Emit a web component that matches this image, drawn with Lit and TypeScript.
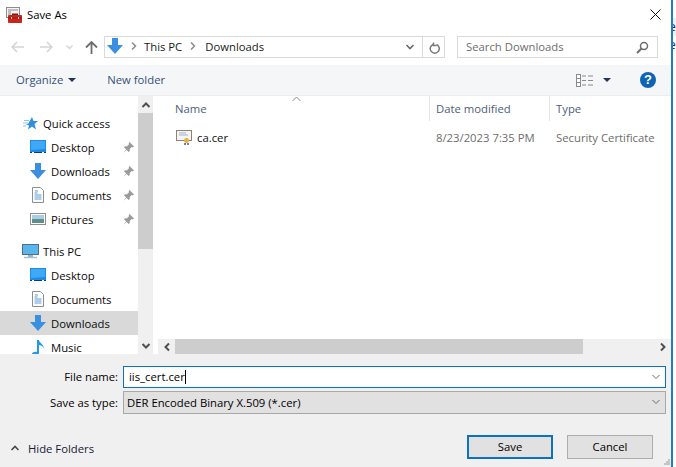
import { LitElement, html, css } from "lit";
import { customElement } from "lit/decorators.js";

const arrow = (c = "#3b8fe0") => html`<svg width="16" height="16" viewBox="0 0 16 16"><path d="M5 0h6v7h5l-8 9-8-9h5z" fill="${c}"/></svg>`;
const desktop = html`<svg width="16" height="14" viewBox="0 0 16 14"><rect x="0" y="0" width="16" height="12" fill="#1b8ce8"/><path d="M1 1h14v8L1 10z" fill="#3fa9f5"/><path d="M0 12h16v1H0z" fill="#0a3d6e"/><path d="M2 12h2v1H2zM12 12h2v1h-2z" fill="#fff"/></svg>`;
const docIcon = html`<svg width="12" height="16" viewBox="0 0 12 16"><path d="M.5.5h8l3 3v12H.5z" fill="#fff" stroke="#8e8e8e"/><path d="M3 4h3M2.500 6h3M2.500 8h7M2.500 10h7M2.500 12h7" stroke="#5a9ad6"/></svg>`;
const pictures = html`<svg width="16" height="12" viewBox="0 0 16 12"><rect x=".5" y=".5" width="15" height="11" fill="#fff" stroke="#8d8d8d"/><rect x="2" y="2" width="12" height="4" fill="#a9cde8"/><rect x="2" y="6" width="12" height="4" fill="#5f8f86"/></svg>`;
const music = html`<svg width="13" height="17" viewBox="0 0 13 17"><path d="M5 1h2c0 3 5 4 5 9-1-3-3-4-5-4v8c0 2-2 3-4 3s-3-1-3-2 2-3 5-2z" fill="#1f9be8"/></svg>`;
const pc = html`<svg width="17" height="15" viewBox="0 0 17 15"><rect x=".5" y=".5" width="16" height="10" fill="#5ab5ec" stroke="#4f6f85"/><path d="M6 11h5v2H6z" fill="#9fb4c2"/><path d="M2 13.500h13" stroke="#a9c0ce" stroke-width="1.500"/></svg>`;
const pin = html`<svg width="11" height="11" viewBox="0 0 11 11"><path d="M6.500 0L11 4.500 9.800 5.300 8.700 5l-2 2 .1 2L5.700 10 1 5.300 2 4.200l2 .1 2-2-.3-1.100zM3 7.500L.3 10.700 3.500 8z" fill="#9a9a9a"/></svg>`;
const star = html`<svg width="15" height="15" viewBox="0 0 15 15"><path d="M9 1l1.500 4H15l-3.500 3 1.500 5.500-4-3-4 3 1-4L2.500 8H5z" fill="#2f8fdc"/><path d="M0 7h5M1 4.500h5M0 10h3" stroke="#8cc6ef"/></svg>`;
const chev = (d: string, c = "#5f5f5f", w = 2) => html`<svg width="10" height="10" viewBox="0 0 10 10"><path d="${d}" fill="none" stroke="${c}" stroke-width="${w}"/></svg>`;
const UP = "M1.500 7L5 3.500 8.500 7";
const DOWN = "M1.500 3L5 6.500 8.500 3";
const LEFT = "M7 1.500L3.500 5 7 8.500";
const RIGHT = "M3 1.500L6.500 5 3 8.500";

@customElement("app-root")
export class AppRoot extends LitElement {
  static styles = css`
    :host { display: block; width: 676px; height: 467px; background: #fff; overflow: hidden;
      font-family: "Open Sans", "Noto Sans", sans-serif; font-size: 11.3px; color: #000; }
    .page { display: flex; width: 676px; height: 467px; }
    .dialog { width: 673px; height: 467px; border-right: 2px solid #1e7ec8; display: flex; flex-direction: column; flex: none; box-sizing: border-box; }
    .strip { flex: 1; min-width: 0; display: flex; flex-direction: column; overflow: hidden; padding-top: 18px; }
    .strip div { line-height: 18px; text-indent: -4px; color: #1a2a3a; font-size: 12px; overflow: hidden; }
    .strip .shade { background: #f0f0f0; }
    .title { height: 30px; display: flex; align-items: center; padding-left: 6px; gap: 5px; flex: none; }
    .title span { margin-top: -2px; }
    .title .x { margin-left: auto; margin-right: 10px; display: flex; margin-top: -2px; }
    .nav { height: 35px; display: flex; align-items: flex-start; flex: none; padding-top: 6px; box-sizing: border-box; }
    .navbtns { width: 104px; height: 22px; display: flex; align-items: center; padding-left: 11px; box-sizing: border-box; }
    .addr { width: 341px; height: 22px; border: 1px solid #d9d9d9; box-sizing: border-box; display: flex; align-items: center; flex: none; padding-left: 2px; }
    .addr > svg { margin-top: -2px; }
    .crumb { display: flex; align-items: center; color: #1a1a1a; margin-top: -2px; }
    .sep { margin: 0 5px 0 6px; display: flex; }
    .dd { margin-left: auto; width: 24px; display: flex; justify-content: center; }
    .refresh { width: 21px; height: 20px; border-left: 1px solid #d9d9d9; display: flex; align-items: center; justify-content: center; }
    .search { margin-left: 12px; width: 201px; height: 22px; border: 1px solid #d9d9d9; box-sizing: border-box; display: flex; align-items: center; padding: 0 8px; color: #6d6d6d; justify-content: space-between; }
    .search span { margin-top: -1px; }
    .tools { height: 31px; background: #f5f6f7; flex: none; display: flex; align-items: center; color: #35527a; box-sizing: border-box; border-bottom: 1px solid #eceded; }
    .organize { margin-left: 16px; display: flex; align-items: center; gap: 5px; margin-top: -1px; }
    .caret { width: 0; height: 0; border-left: 4px solid transparent; border-right: 4px solid transparent; border-top: 4px solid #1f3658; }
    .newf { margin-left: 31px; margin-top: -1px; }
    .views { margin-left: auto; display: flex; align-items: center; gap: 10px; margin-right: 29px; }
    .help { margin-right: 15px; width: 16px; height: 16px; border-radius: 50%; background: #0e63b5; color: #fff; font: bold 13px/16px "Liberation Sans", sans-serif; text-align: center; }
    .main { height: 258px; display: flex; flex: none; }
    .tree { width: 138px; flex: none; overflow: hidden; padding-top: 15px; box-sizing: border-box; color: #0a0a0a; }
    .row { height: 24px; display: flex; align-items: center; }
    .row .ic { width: 18px; margin-left: 29px; margin-right: 4px; display: flex; justify-content: center; flex: none; }
    .row.top .ic { margin-left: 21px; margin-right: 4px; }
    .row.sel { background: #d9d9d9; }
    .row .pin { margin-left: auto; margin-right: 4px; display: flex; }
    .gap { height: 8px; }
    .vs { width: 15px; background: #f0f0f0; flex: none; display: flex; flex-direction: column; }
    .sb { height: 17px; display: flex; align-items: center; justify-content: center; flex: none; }
    .vthumb { height: 136px; background: #cdcdcd; flex: none; }
    .vfill { flex: 1; }
    .right { flex: 1; padding-left: 5px; display: flex; flex-direction: column; min-width: 0; }
    .head { height: 25px; display: grid; grid-template-columns: 272px 120px 120px; color: #4c607a; flex: none; }
    .head > div { display: flex; align-items: center; padding-left: 6px; box-sizing: border-box; border-right: 1px solid #e5e5e5; position: relative; }
    .head > div:first-child { padding-left: 17px; }
    .head > div:last-child { border-right: none; }
    .sort { position: absolute; left: 134px; top: 0; display: flex; }
    .file { height: 24px; margin-top: 4px; display: grid; grid-template-columns: 272px 120px 120px; align-items: center; color: #6d6d6d; flex: none; }
    .file > div { padding-left: 6px; white-space: nowrap; overflow: hidden; }
    .file .name { display: flex; align-items: center; gap: 5px; padding-left: 18px; color: #111; }
    .hs { height: 15px; display: flex; align-items: center; background: #f0f0f0; margin-top: auto; flex: none; }
    .hs .b { width: 17px; display: flex; justify-content: center; flex: none; }
    .hthumb { width: 408px; height: 15px; background: #cdcdcd; flex: none; }
    .hs .r { margin-left: auto; }
    .bottom { flex: 1; background: #f0f0f0; position: relative; padding-top: 12px; box-sizing: border-box; }
    .field { display: flex; align-items: center; margin-bottom: 3px; }
    .field label { width: 118px; text-align: right; margin-right: 5px; flex: none; padding-bottom: 1px; }
    .input { width: 543px; height: 22px; box-sizing: border-box; border: 1px solid #0a72c4; background: #fff; display: flex; align-items: center; padding: 0 0 1px 5px; }
    .input .cursor { width: 1px; height: 14px; background: #000; }
    .select { width: 543px; height: 23px; box-sizing: border-box; border: 1px solid #a8a8a8; background: #e1e1e1; display: flex; align-items: center; padding: 0 0 1px 3px; }
    .arrow { margin-left: auto; margin-right: 4px; display: flex; }
    .foot { display: flex; align-items: center; margin-top: 21px; }
    .hide { display: flex; align-items: center; gap: 8px; margin-left: 10px; margin-top: 2px; color: #1a2033; }
    .btn { width: 86px; height: 24px; box-sizing: border-box; border: 1px solid #adadad; background: #e1e1e1; display: flex; align-items: center; justify-content: center; padding-bottom: 2px; }
    .btn.def { border: 2px solid #0a72c4; margin-left: auto; margin-right: 14px; }
    .btn.cancel { margin-right: 18px; }
    .grip { position: absolute; right: 1px; bottom: 2px; display: flex; }
  `;

  render() {
    return html`<div class="page">
      <div class="dialog">
        <div class="title">
          <svg width="16" height="16" viewBox="0 0 16 16"><rect x=".5" y="0.500" width="13" height="10" fill="#f4f4f4" stroke="#8b8b8b"/><path d="M2 3h10M2 5h3M2 7h3" stroke="#8b8b8b"/><rect x="2" y="8" width="14" height="8" rx="1" fill="#c8261d"/><path d="M6 6.500h6V8H6z" fill="#7a1f1a"/><path d="M2 11h14" stroke="#8f1a14"/><path d="M5 10h1v2H5zM12 10h1v2h-1z" fill="#f6d9d6"/></svg>
          <span>Save As</span>
          <div class="x"><svg width="11" height="11" viewBox="0 0 11 11"><path d="M.5.500l10 10M10.500.500l-10 10" stroke="#111" stroke-width="1"/></svg></div>
        </div>
        <div class="nav">
          <div class="navbtns">
            <svg width="13" height="12" viewBox="0 0 13 12"><path d="M6 1L1.200 6 6 11M1.500 6H13" fill="none" stroke="#d4d4d4" stroke-width="1.600"/></svg>
            <svg style="margin-left:16px" width="13" height="12" viewBox="0 0 13 12"><path d="M7 1l4.800 5L7 11M11.500 6H0" fill="none" stroke="#d4d4d4" stroke-width="1.600"/></svg>
            <svg style="margin-left:12px" width="9" height="8" viewBox="0 0 9 8"><path d="M1.500 2.500L4.500 5.500 7.500 2.500" fill="none" stroke="#d4d4d4" stroke-width="1.400"/></svg>
            <svg style="margin-left:11px" width="13" height="13" viewBox="0 0 13 13"><path d="M1 6.500L6.500 1 12 6.500M6.500 1.500V13" fill="none" stroke="#6e6e6e" stroke-width="1.800"/></svg>
          </div>
          <div class="addr">
            ${arrow()}
            <div class="crumb">
              <span class="sep">${chev(RIGHT, "#8a8a8a", 1.5)}</span><span>This PC</span>
              <span class="sep" style="margin-right:7px">${chev(RIGHT, "#8a8a8a", 1.5)}</span><span>Downloads</span>
            </div>
            <div class="dd">${chev(DOWN, "#6a6a6a", 1.6)}</div>
            <div class="refresh"><svg width="12" height="13" viewBox="0 0 12 13"><path d="M4 2.500a4.500 4.500 0 1 0 3.500.0M4.500 .5v3h3" transform="translate(1 1)" fill="none" stroke="#7a7a7a" stroke-width="1.500"/></svg></div>
          </div>
          <div class="search"><span>Search Downloads</span>
            <svg width="13" height="13" viewBox="0 0 13 13"><circle cx="8" cy="5" r="3.500" fill="none" stroke="#6e6e6e" stroke-width="1.500"/><path d="M5.500 7.500L1 12" stroke="#6e6e6e" stroke-width="2"/></svg>
          </div>
        </div>
        <div class="tools">
          <div class="organize"><span>Organize</span><span class="caret"></span></div>
          <div class="newf">New folder</div>
          <div class="views">
            <svg width="17" height="13" viewBox="0 0 17 13"><rect x=".5" y=".5" width="4" height="12" fill="#fff" stroke="#8a8a8a"/><path d="M1 4.500h3M1 8.500h3" stroke="#8a8a8a"/><path d="M6 2h4M6 6.500h4M6 11h4M12 2h5M12 6.500h5M12 11h5" stroke="#8a8a8a"/></svg>
            <span class="caret"></span>
          </div>
          <div class="help">?</div>
        </div>
        <div class="main">
          <div class="tree">
            ${this.top(star, "Quick access")}
            ${this.item(desktop, "Desktop", true)}
            ${this.item(arrow(), "Downloads", true)}
            ${this.item(docIcon, "Documents", true)}
            ${this.item(pictures, "Pictures", true)}
            <div class="gap"></div>
            ${this.top(pc, "This PC")}
            ${this.item(desktop, "Desktop")}
            ${this.item(docIcon, "Documents")}
            ${this.item(arrow(), "Downloads", false, true)}
            ${this.item(music, "Music")}
          </div>
          <div class="vs">
            <div class="sb">${chev(UP, "#505050")}</div>
            <div class="vthumb"></div>
            <div class="vfill"></div>
            <div class="sb">${chev(DOWN, "#505050")}</div>
          </div>
          <div class="right">
            <div class="head">
              <div>Name<span class="sort"><svg width="9" height="6" viewBox="0 0 9 6"><path d="M.5 5L4.500 1l4 4" fill="none" stroke="#8a8a8a"/></svg></span></div>
              <div>Date modified</div>
              <div>Type</div>
            </div>
            <div class="file">
              <div class="name">
                <svg width="16" height="16" viewBox="0 0 16 16"><rect x=".5" y="1.500" width="15" height="10" fill="#f4f4f4" stroke="#8f8270"/><path d="M3 4h7M3 6h9" stroke="#9db3cc"/><circle cx="10.500" cy="11.500" r="2.500" fill="#e8b23a"/><path d="M9 14v2M12 14v2" stroke="#2f62b0" stroke-width="1.500"/></svg>
                <span>ca.cer</span>
              </div>
              <div>8/23/2023 7:35 PM</div>
              <div>Security Certificate</div>
            </div>
            <div class="hs">
              <div class="b">${chev(LEFT, "#505050")}</div>
              <div class="hthumb"></div>
              <div class="b r">${chev(RIGHT, "#505050")}</div>
            </div>
          </div>
        </div>
        <div class="bottom">
          <div class="field"><label>File name:</label>
            <div class="input"><span>iis_cert.cer</span><span class="cursor"></span><span class="arrow">${chev(DOWN, "#6a6a6a", 1)}</span></div>
          </div>
          <div class="field"><label>Save as type:</label>
            <div class="select"><span>DER Encoded Binary X.509 (*.cer)</span><span class="arrow">${chev(DOWN, "#6a6a6a", 1)}</span></div>
          </div>
          <div class="foot">
            <div class="hide">${chev(UP, "#4a4a4a", 1.6)}<span>Hide Folders</span></div>
            <div class="btn def">Save</div>
            <div class="btn cancel">Cancel</div>
          </div>
          <div class="grip"><svg width="6" height="6" viewBox="0 0 6 6"><path d="M4 0h2v2H4zM2 2h2v2H2zM4 2h2v2H4zM0 4h2v2H0zM2 4h2v2H2zM4 4h2v2H4z" fill="#c4c4c4"/></svg></div>
        </div>
      </div>
      <div class="strip"><div class="shade">e</div><div>e</div></div>
    </div>`;
  }

  top(icon: unknown, label: string) {
    return html`<div class="row top"><span class="ic">${icon}</span><span>${label}</span></div>`;
  }
  item(icon: unknown, label: string, pinned = false, selected = false) {
    return html`<div class="row ${selected ? "sel" : ""}"><span class="ic">${icon}</span><span>${label}</span>${pinned ? html`<span class="pin">${pin}</span>` : ""}</div>`;
  }
}
